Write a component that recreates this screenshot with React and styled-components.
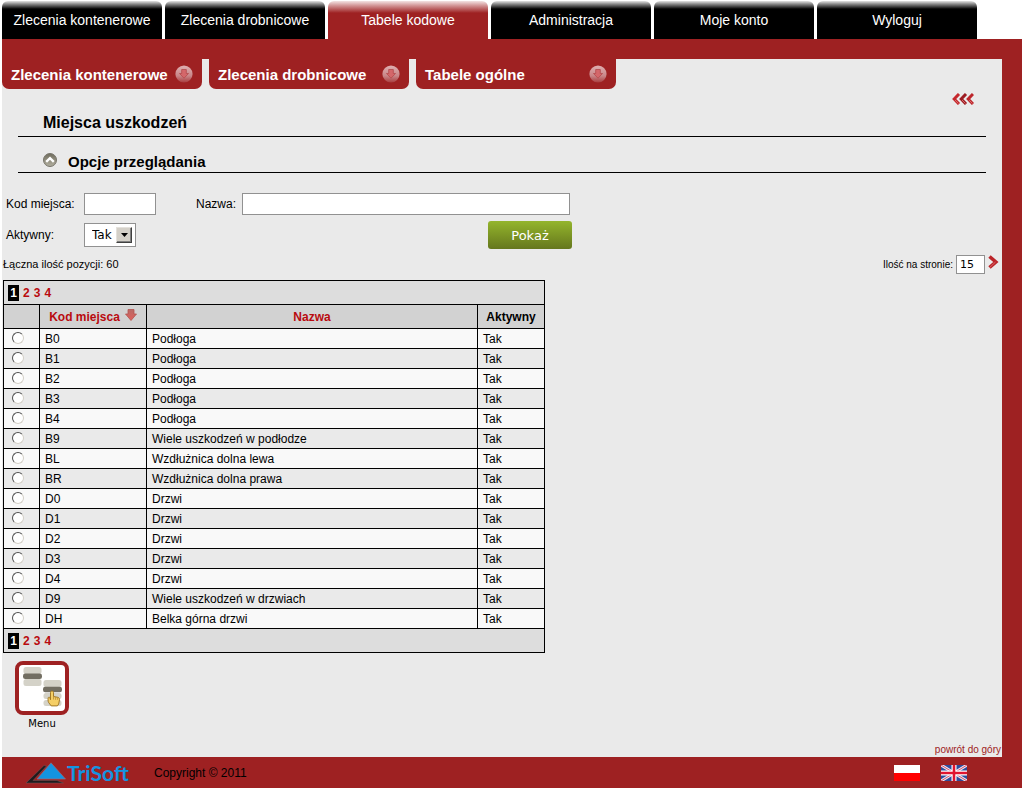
import React, { useState } from "react";
import styled, { createGlobalStyle, css } from "styled-components";

const mainTabs = [
  "Zlecenia kontenerowe",
  "Zlecenia drobnicowe",
  "Tabele kodowe",
  "Administracja",
  "Moje konto",
  "Wyloguj",
];

const subTabs = ["Zlecenia kontenerowe", "Zlecenia drobnicowe", "Tabele ogólne"];

const places = [
  { code: "B0", name: "Podłoga" },
  { code: "B1", name: "Podłoga" },
  { code: "B2", name: "Podłoga" },
  { code: "B3", name: "Podłoga" },
  { code: "B4", name: "Podłoga" },
  { code: "B9", name: "Wiele uszkodzeń w podłodze" },
  { code: "BL", name: "Wzdłużnica dolna lewa" },
  { code: "BR", name: "Wzdłużnica dolna prawa" },
  { code: "D0", name: "Drzwi" },
  { code: "D1", name: "Drzwi" },
  { code: "D2", name: "Drzwi" },
  { code: "D3", name: "Drzwi" },
  { code: "D4", name: "Drzwi" },
  { code: "D9", name: "Wiele uszkodzeń w drzwiach" },
  { code: "DH", name: "Belka górna drzwi" },
];

// Icons
const DownCircleIcon = () => (
  <svg width="18" height="18" viewBox="0 0 18 18" aria-hidden="true">
    <defs>
      <linearGradient id="disc" x1="0" y1="0" x2="0" y2="1">
        <stop offset="0" stopColor="#dfb0b1" />
        <stop offset="0.6" stopColor="#c98789" />
        <stop offset="1" stopColor="#a93c3e" />
      </linearGradient>
    </defs>
    <circle cx="9" cy="9" r="8.6" fill="url(#disc)" />
    <path
      d="M6.7 4.5h4.6v4h2.2L9 13.2 4.5 8.5h2.2z"
      fill="#d4676a"
      stroke="#b24a4c"
      strokeWidth="0.8"
    />
  </svg>
);

const CollapseIcon = () => (
  <svg width="14" height="14" viewBox="0 0 14 14" aria-hidden="true">
    <defs>
      <linearGradient id="olive" x1="0" y1="0" x2="0" y2="1">
        <stop offset="0" stopColor="#6f6c5d" />
        <stop offset="1" stopColor="#b3b0a0" />
      </linearGradient>
    </defs>
    <circle cx="7" cy="7" r="6.5" fill="url(#olive)" stroke="#77746a" />
    <path d="M3.2 8.8 7 5.2l3.8 3.6" fill="none" stroke="#fff" strokeWidth="2.4" />
  </svg>
);

const BackIcon = () => (
  <svg width="22" height="12" viewBox="0 0 22 12" aria-hidden="true">
    <g fill="none" strokeWidth="3">
      <path d="M7 1 2.2 6 7 11" stroke="#c5282c" />
      <path d="M14 1 9.2 6l4.8 5" stroke="#9c1d22" />
      <path d="M21 1l-4.8 5 4.8 5" stroke="#bd262b" />
    </g>
    <path d="M3 7l3.5 3.5M10 7l3.5 3.5M17 7l3.5 3.5" stroke="#d9686a" />
  </svg>
);

const NextIcon = () => (
  <svg width="11" height="14" viewBox="0 0 11 14" aria-hidden="true">
    <path d="M1.5 1.5 7.8 7l-6.3 5.5" fill="none" stroke="#bb2429" strokeWidth="3.6" />
    <path d="M2 12.2 7.5 7" stroke="#d9686a" />
  </svg>
);

const SortIcon = () => (
  <svg width="12" height="12" viewBox="0 0 12 12" aria-hidden="true">
    <defs>
      <linearGradient id="sort" x1="0" y1="0" x2="0" y2="1">
        <stop offset="0" stopColor="#b96a66" />
        <stop offset="1" stopColor="#e0605c" />
      </linearGradient>
    </defs>
    <path
      d="M3 .5h6V5h2.500L6 11.500.5 5H3z"
      fill="url(#sort)"
      stroke="#b4534f"
      strokeWidth="0.8"
    />
  </svg>
);

const MenuIcon = () => (
  <svg width="46" height="46" viewBox="0 0 46 46" aria-hidden="true">
    <g fill="#d4d2c8">
      <rect x="4.5" y="2" width="18" height="7" rx="2.5" />
      <rect x="4.5" y="14" width="18" height="7" rx="2.5" />
      <rect x="24.5" y="15" width="18" height="7" rx="2.5" />
      <rect x="24.5" y="28" width="18" height="6" rx="2.5" />
      <rect x="24.5" y="35" width="18" height="6" rx="2.5" />
    </g>
    <rect x="4" y="8.5" width="19" height="5.5" rx="2.2" fill="#726e62" />
    <rect x="24" y="21.7" width="19" height="5.5" rx="2.2" fill="#726e62" />
    <path
      d="M31.5 27.5c0-2 3-2 3 0V31.5l4.3.8c1.4.4 1.8 1.2 1.7 2.4l-.8 4.3-1.3 1.9h-6.2l-2.6-3.4c-.8-1.3-.6-4-.4-4.8.4-.9 1.8-.6 1.9.4l.4 1.6z"
      fill="#f5cf66"
      stroke="#9a6f1c"
      strokeWidth="0.9"
    />
    <path d="M34.5 31.5v3M36.6 32v2.8M38.6 32.5v2.3" stroke="#b98c35" strokeWidth="0.8" />
  </svg>
);

const LogoMark = () => (
  <svg width="41" height="22" viewBox="0 0 41 22" aria-hidden="true">
    <path
      d="M0 21 18 3.500l2.500.5L7 18.500h24l6.500 2.500z"
      fill="#211a1c"
      stroke="#6d5a5c"
      strokeWidth="0.5"
    />
    <path
      d="M25 .8 39.500 17H11z"
      fill="#1494e0"
      stroke="#9d6a72"
      strokeWidth="0.7"
    />
  </svg>
);

const PolishFlag = () => (
  <svg width="26" height="16" viewBox="0 0 26 16" aria-hidden="true">
    <path d="M0 0h26v8H0z" fill="#fff" />
    <path d="M0 8h26v8H0z" fill="#f00" />
  </svg>
);

const BritishFlag = () => (
  <svg width="26" height="16" viewBox="0 0 26 16" aria-hidden="true">
    <path d="M0 0h26v16H0z" fill="#2d4b9b" />
    <path d="M0 0l26 16M26 0 0 16" stroke="#e9e4ee" strokeWidth="3" />
    <path d="M0 0l26 16M26 0 0 16" stroke="#d8405a" strokeWidth="0.9" />
    <path d="M13 0v16M0 8h26" stroke="#fff" strokeWidth="5" />
    <path d="M13 0v16M0 8h26" stroke="#e0142f" strokeWidth="2.6" />
  </svg>
);

const Pager = () => (
  <StyledPager>
    <span className="current">1</span>
    <a href="#2">2</a>
    <a href="#3">3</a>
    <a href="#4">4</a>
  </StyledPager>
);

const Filters = () => (
  <FilterForm onSubmit={(e) => e.preventDefault()}>
    <FilterRow>
      <Label htmlFor="code" $width="78px">
        Kod miejsca:
      </Label>
      <TextInput id="code" $width="72px" />
      <NameField>
        <Label htmlFor="name" $width="46px">
          Nazwa:
        </Label>
        <TextInput id="name" $width="328px" />
      </NameField>
    </FilterRow>
    <FilterRow>
      <Label htmlFor="active" $width="78px">
        Aktywny:
      </Label>
      <SelectBox>
        <select id="active" defaultValue="Tak">
          <option>Tak</option>
          <option>Nie</option>
        </select>
        <SelectArrow>
          <svg width="7" height="4" viewBox="0 0 7 4" aria-hidden="true">
            <path d="M0 0h7L3.5 4z" />
          </svg>
        </SelectArrow>
      </SelectBox>
      <SubmitButton type="submit">Pokaż</SubmitButton>
    </FilterRow>
  </FilterForm>
);

const PlacesTable = () => {
  const [selected, setSelected] = useState(null);

  return (
    <Table>
      <colgroup>
        <col className="select" />
        <col className="code" />
        <col className="name" />
        <col />
      </colgroup>
      <thead>
        <tr className="pager">
          <td colSpan={4}>
            <Pager />
          </td>
        </tr>
        <tr>
          <th aria-label="Wybór" />
          <th>
            <SortLink href="#code">
              Kod miejsca
              <SortIcon />
            </SortLink>
          </th>
          <th>
            <SortLink href="#name">Nazwa</SortLink>
          </th>
          <th>Aktywny</th>
        </tr>
      </thead>
      <tbody>
        {places.map(({ code, name }) => (
          <tr key={code}>
            <td>
              <Radio
                name="place"
                aria-label={code}
                checked={selected === code}
                onChange={() => setSelected(code)}
              />
            </td>
            <td>{code}</td>
            <td>{name}</td>
            <td>Tak</td>
          </tr>
        ))}
      </tbody>
      <tfoot>
        <tr className="pager">
          <td colSpan={4}>
            <Pager />
          </td>
        </tr>
      </tfoot>
    </Table>
  );
};

const App = () => {
  return (
    <Page>
      <GlobalStyle />
      <MainNav>
        {mainTabs.map((tab) => (
          <MainTab key={tab} href="#tab" $active={tab === "Tabele kodowe"}>
            {tab}
          </MainTab>
        ))}
      </MainNav>

      <Content>
        <SubNav>
          {subTabs.map((tab) => (
            <SubTab key={tab} type="button">
              {tab}
              <DownCircleIcon />
            </SubTab>
          ))}
        </SubNav>

        <BackRow>
          <IconButton type="button" aria-label="Wstecz">
            <BackIcon />
          </IconButton>
        </BackRow>
        <Title>Miejsca uszkodzeń</Title>
        <SectionHeader>
          <IconButton type="button" aria-label="Zwiń">
            <CollapseIcon />
          </IconButton>
          <h2>Opcje przeglądania</h2>
        </SectionHeader>

        <Filters />

        <Summary>
          <span>Łączna ilość pozycji: 60</span>
          <PageSize>
            <label htmlFor="page-size">Ilość na stronie:</label>
            <input id="page-size" defaultValue="15" />
            <IconButton type="button" aria-label="Zastosuj">
              <NextIcon />
            </IconButton>
          </PageSize>
        </Summary>

        <PlacesTable />

        <MenuButton type="button">
          <span className="frame">
            <MenuIcon />
          </span>
          Menu
        </MenuButton>

        <TopLink href="#top">powrót do góry</TopLink>
      </Content>

      <Footer>
        <Logo href="#trisoft">
          <LogoMark />
          TriSoft
        </Logo>
        <span>Copyright © 2011</span>
        <Languages>
          <a href="#pl" aria-label="Polski">
            <PolishFlag />
          </a>
          <a href="#en" aria-label="English">
            <BritishFlag />
          </a>
        </Languages>
      </Footer>
    </Page>
  );
};

const red = "#9e2122";
const arial = `"Liberation Sans", Arial, sans-serif`;
const verdana = `"DejaVu Sans", Verdana, sans-serif`;

const GlobalStyle = createGlobalStyle`
  * {
    box-sizing: border-box;
  }

  body {
    margin: 0;
    background: #ffffff;
    color: #000000;
    font-family: ${arial};
    font-size: 12px;
  }

  svg {
    display: block;
    flex: none;
  }
`;

const Page = styled.div`
  padding: 1px 3px 4px 2px;
`;

const MainNav = styled.nav`
  display: flex;
  gap: 3px;
`;

const MainTab = styled.a`
  width: 160px;
  height: 38px;
  border-radius: 6px 6px 0 0;
  background: linear-gradient(#e4e4e4, #8a8a8a 3px, #000000 8px);
  color: #ffffff;
  font-size: 14px;
  line-height: 38px;
  text-align: center;
  text-decoration: none;

  ${(props) =>
    props.$active &&
    css`
      background: linear-gradient(#f3e3e3, #cf8e8f 5px, ${red} 12px);
    `}
`;

const Content = styled.main`
  border: solid ${red};
  border-width: 20px 20px 0 0;
  background: #eaeaea;
`;

const SubNav = styled.nav`
  display: flex;
  gap: 7px;
`;

const SubTab = styled.button`
  display: flex;
  align-items: center;
  justify-content: space-between;
  width: 200px;
  height: 30px;
  padding: 0 9px;
  border: 0;
  border-radius: 0 0 7px 7px;
  background: ${red};
  color: #ffffff;
  font: bold 15px ${arial};
`;

const IconButton = styled.button`
  padding: 0;
  border: 0;
  background: none;
`;

const BackRow = styled.div`
  display: flex;
  align-items: center;
  justify-content: flex-end;
  height: 20px;
  padding-right: 28px;
`;

const Title = styled.h1`
  margin: 0 16px;
  padding: 1px 0 0 25px;
  border-bottom: 1px solid #000000;
  font-size: 16px;
  line-height: 26px;
`;

const SectionHeader = styled.div`
  display: flex;
  align-items: flex-end;
  gap: 11px;
  height: 36px;
  margin: 0 16px;
  padding-left: 25px;
  border-bottom: 1px solid #000000;

  button {
    padding-bottom: 5px;
  }

  h2 {
    margin: 0;
    font-size: 15px;
    line-height: 20px;
  }
`;

const FilterForm = styled.form`
  display: flex;
  flex-direction: column;
  gap: 6px;
  max-width: 570px;
  padding: 20px 0 0 4px;
`;

const FilterRow = styled.div`
  display: flex;
  align-items: center;
`;

const NameField = styled.div`
  display: flex;
  align-items: center;
  margin-left: 40px;
`;

const Label = styled.label`
  width: ${(props) => props.$width};
`;

const TextInput = styled.input.attrs({ type: "text" })`
  width: ${(props) => props.$width};
  height: 22px;
  padding: 0 6px;
  border: 1px solid #919191;
  background: #ffffff;
  font: 13px ${verdana};
`;

const SelectBox = styled.div`
  display: grid;
  grid-template-columns: 52px;
  align-items: center;

  select,
  span {
    grid-area: 1 / 1;
  }

  select {
    height: 24px;
    padding: 0 0 0 7px;
    border: 1px solid #919191;
    border-radius: 0;
    background: #ffffff;
    appearance: none;
    color: #000000;
    font: 12px ${verdana};
  }
`;

const SelectArrow = styled.span`
  display: flex;
  align-items: center;
  justify-content: center;
  justify-self: end;
  width: 16px;
  height: 16px;
  margin-right: 4px;
  border: 1px solid;
  border-color: #e4e1dc #404040 #404040 #e4e1dc;
  background: #d4d0c8;
  box-shadow: inset -1px -1px #808080;
  pointer-events: none;
`;

const SubmitButton = styled.button`
  width: 84px;
  height: 28px;
  margin-left: auto;
  border: 0;
  border-radius: 3px;
  background: linear-gradient(#94b52c, #65771d);
  color: #ffffff;
  font: 13px ${verdana};
`;

const Summary = styled.div`
  display: flex;
  align-items: center;
  justify-content: space-between;
  height: 22px;
  margin: 4px 0 5px;
  padding: 0 3px 0 1px;
  font-size: 11px;
`;

const PageSize = styled.div`
  display: flex;
  align-items: center;
  gap: 3px;
  font-size: 10px;

  input {
    width: 29px;
    height: 19px;
    padding: 0 3px;
    border: 1px solid #919191;
    font: 11px ${verdana};
  }

  button {
    padding-bottom: 4px;
  }
`;

const Table = styled.table`
  width: 542px;
  margin-left: 1px;
  border-collapse: collapse;
  table-layout: fixed;

  .select {
    width: 36px;
  }

  .code {
    width: 107px;
  }

  .name {
    width: 331px;
  }

  tr {
    height: 20px;
    background: #eaeaea;
  }

  tbody tr:nth-child(odd) {
    background: #f9f9f9;
  }

  th,
  td {
    padding: 0 5px;
    border: 1px solid #000000;
    line-height: 16px;
  }

  td:first-child {
    padding: 0 4px;
  }

  thead tr {
    height: 24px;
    background: #d2d2d2;
  }

  tr.pager {
    height: 24px;
    background: #dddddd;
  }
`;

const SortLink = styled.a`
  display: flex;
  justify-content: center;
  gap: 5px;
  color: #b90a0f;
  text-decoration: none;
`;

const Radio = styled.input.attrs({ type: "radio" })`
  display: block;
  width: 12px;
  height: 12px;
  margin: 0 0 2px 4px;
  border: 1px solid;
  border-color: #505050 #d4d0c8 #d4d0c8 #505050;
  border-radius: 50%;
  background: #ffffff;
  appearance: none;

  &:checked {
    background: radial-gradient(#000000 2px, #ffffff 3px);
  }
`;

const StyledPager = styled.div`
  display: flex;
  gap: 4px;
  font-weight: bold;

  .current {
    width: 11px;
    background: #000000;
    color: #ffffff;
    text-align: center;
  }

  a {
    color: #b90a0f;
    text-decoration: none;
  }
`;

const MenuButton = styled.button`
  display: flex;
  flex-direction: column;
  align-items: center;
  gap: 2px;
  margin: 8px 0 0 13px;
  padding: 0;
  border: 0;
  background: none;
  color: #000000;
  font: 10px/14px ${verdana};

  .frame {
    border: 4px solid ${red};
    border-radius: 8px;
    background: #ffffff;
  }
`;

const TopLink = styled.a`
  display: block;
  width: max-content;
  margin: 12px 1px 0 auto;
  color: ${red};
  font-size: 10px;
  line-height: 14px;
  text-decoration: none;
`;

const Footer = styled.footer`
  display: flex;
  align-items: center;
  height: 31px;
  padding: 0 55px 0 24px;
  background: ${red};
`;

const Logo = styled.a`
  display: flex;
  align-items: center;
  width: 128px;
  color: #1494e0;
  font: bold 21px/22px Lato, sans-serif;
  text-decoration: none;
`;

const Languages = styled.div`
  display: flex;
  gap: 21px;
  margin-left: auto;
`;

export default App;
